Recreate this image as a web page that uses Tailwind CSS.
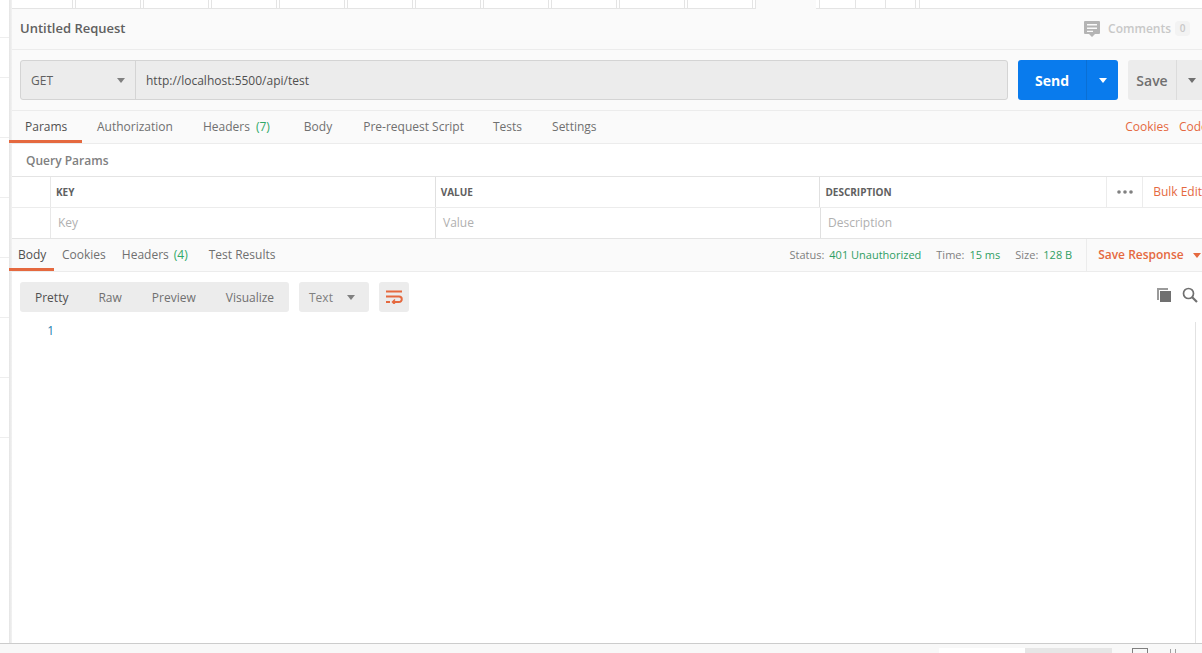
<!DOCTYPE html>
<html lang="en">
<head>
  <meta charset="UTF-8" />
  <title>Untitled Request</title>
  <script src="https://cdn.jsdelivr.net/npm/@tailwindcss/browser@4"></script>
</head>
<body class="h-[653px] w-[1202px] overflow-hidden bg-white font-['Open_Sans',sans-serif] text-[#505050]">
  <div class="flex h-[643px]">
    <!-- sidebar edge -->
    <div class="w-[9px] shrink-0 bg-white">
      <div class="h-[38px] border-b border-[#eeeeee]"></div>
      <div class="h-[40px] border-b border-[#eeeeee]"></div>
      <div class="h-[60px] border-b border-[#eeeeee]"></div>
      <div class="h-[60px] border-b border-[#eeeeee]"></div>
      <div class="h-[60px] border-b border-[#eeeeee]"></div>
      <div class="h-[60px] border-b border-[#eeeeee]"></div>
      <div class="h-[60px] border-b border-[#eeeeee]"></div>
      <div class="h-[60px] border-b border-[#eeeeee]"></div>
    </div>

    <div class="relative min-w-0 flex-1 overflow-hidden">
      <div class="absolute inset-y-0 left-0 w-[3px] bg-gradient-to-r from-[#e4e4e4] to-[#f2f2f2]"></div>

      <!-- request tab strip -->
      <div class="flex h-[9px] items-stretch border-b border-[#e4e4e4] bg-white pl-[63px]">
        <div class="w-[4px] border-x border-[#e4e4e4]"></div><div class="w-[64px]"></div>
        <div class="w-[4px] border-x border-[#e4e4e4]"></div><div class="w-[64px]"></div>
        <div class="w-[4px] border-x border-[#e4e4e4]"></div><div class="w-[64px]"></div>
        <div class="w-[4px] border-x border-[#e4e4e4]"></div><div class="w-[64px]"></div>
        <div class="w-[4px] border-x border-[#e4e4e4]"></div><div class="w-[64px]"></div>
        <div class="w-[4px] border-x border-[#e4e4e4]"></div><div class="w-[64px]"></div>
        <div class="w-[4px] border-x border-[#e4e4e4]"></div><div class="w-[64px]"></div>
        <div class="w-[4px] border-x border-[#e4e4e4]"></div><div class="w-[64px]"></div>
        <div class="w-[4px] border-x border-[#e4e4e4]"></div><div class="w-[64px]"></div>
        <div class="w-[4px] border-x border-[#e4e4e4]"></div><div class="w-[64px]"></div>
        <div class="w-[4px] border-x border-[#e4e4e4]"></div>
        <div class="-mb-px w-[60px] bg-[#fafafa]"></div>
        <div class="w-[3px]"></div>
        <div class="w-[37px] border-x border-[#e4e4e4]"></div>
        <div class="w-[30px] border-r border-[#e4e4e4]"></div>
        <div class="w-[30px] border-r border-[#e4e4e4]"></div>
        <div class="w-[4px] border-r border-[#e4e4e4]"></div>
      </div>

      <!-- title -->
      <div class="flex h-[41px] items-center justify-between border-b border-[#ececec] bg-[#fafafa] pb-px pl-[11px] pr-[12px]">
        <div class="text-[13px] font-semibold text-[#606060]">Untitled Request</div>
        <div class="flex items-center text-[12px] font-semibold text-[#c8c8c8]">
          <svg class="mr-2 mt-px" width="16" height="17" viewBox="0 0 16 17"><path fill="#b4b4b4" fill-rule="evenodd" d="M1 0h14a1 1 0 0 1 1 1v11a1 1 0 0 1-1 1h-4l-3 3-3-3H1a1 1 0 0 1-1-1V1a1 1 0 0 1 1-1zm2 3v1.600h10V3zm0 3.500v1.600h10V6.500zm0 3.200v1.300h6V9.700z"/></svg>
          <span>Comments</span>
          <span class="ml-[4px] flex h-[15px] w-[15px] items-center justify-center rounded-sm bg-[#f3f3f3] text-[10px]">0</span>
        </div>
      </div>

      <!-- url bar -->
      <div class="flex h-[61px] items-start border-b border-[#ececec] bg-[#fafafa] pl-[11px] pt-[10px]">
        <div class="flex h-[40px] w-[988px] items-stretch rounded-[3px] border border-[#d4d4d4] bg-[#ececec] text-[12px]">
          <div class="flex w-[115px] items-center justify-between border-r border-[#d4d4d4] pl-[10px] pr-[10px] pt-px font-medium text-[#606060]">
            <span>GET</span>
            <svg width="8" height="5" viewBox="0 0 8 5"><path fill="#808080" d="M0 0h8L4 5z"/></svg>
          </div>
          <div class="flex items-center pl-[10px] pt-px text-[#505050]">http://localhost:5500/api/test</div>
        </div>
        <div class="ml-[10px] flex h-[40px] w-[100px] shrink-0 items-stretch rounded-[3px] bg-[#097bed] text-white">
          <div class="flex w-[69px] items-center justify-center border-r border-[#0a6fd4] text-[14px] font-bold">Send</div>
          <div class="flex flex-1 items-center justify-center">
            <svg width="8" height="5" viewBox="0 0 8 5"><path fill="#ffffff" d="M0 0h8L4 5z"/></svg>
          </div>
        </div>
        <div class="ml-[10px] flex h-[40px] w-[74px] shrink-0 items-stretch rounded-l-[3px] bg-[#ececec] text-[#707070]">
          <div class="flex w-[49px] items-center justify-center border-r border-[#dcdcdc] text-[14px] font-semibold">Save</div>
          <div class="flex flex-1 items-center justify-center pl-[5px]">
            <svg width="8" height="5" viewBox="0 0 8 5"><path fill="#707070" d="M0 0h8L4 5z"/></svg>
          </div>
        </div>
      </div>

      <!-- request tabs -->
      <div class="flex h-[33px] items-stretch border-b border-[#ececec] bg-[#fafafa] text-[12px] text-[#707070]">
        <div class="relative z-10 flex w-[73px] items-center border-b-[3px] border-[#e5693f] pl-[16px] pt-[3px] text-[#505050]">Params</div>
        <div class="ml-[15px] flex items-center">Authorization</div>
        <div class="ml-[30px] flex items-center">Headers <span class="ml-[6px] text-[#2fa866]">(7)</span></div>
        <div class="ml-[34px] flex items-center">Body</div>
        <div class="ml-[31px] flex items-center">Pre-request Script</div>
        <div class="ml-[29px] flex items-center">Tests</div>
        <div class="ml-[30px] flex items-center">Settings</div>
        <div class="ml-auto flex items-center whitespace-nowrap text-[#e5693f]"><span>Cookies</span><span class="ml-[10px] w-[23px] overflow-hidden">Code</span></div>
      </div>

      <!-- query params -->
      <div class="flex h-[33px] items-center border-b border-[#e4e4e4] pl-[17px] pt-px text-[12px] font-semibold text-[#808080]">Query Params</div>
      <div class="flex h-[31px] border-b border-[#ececec] text-[10px] font-bold text-[#606060]">
        <div class="w-[42px] border-r border-[#e8e8e8]"></div>
        <div class="flex w-[385px] items-center border-r border-[#e0e0e0] pl-[5px]">KEY</div>
        <div class="flex w-[385px] items-center border-r border-[#e0e0e0] pl-[5px]">VALUE</div>
        <div class="flex w-[287px] items-center border-r border-[#ececec] pl-[5px]">DESCRIPTION</div>
        <div class="flex w-[36px] items-center justify-center border-r border-[#ececec]">
          <svg width="16" height="4" viewBox="0 0 16 4"><circle cx="2" cy="2" r="1.800" fill="#808080"/><circle cx="8" cy="2" r="1.800" fill="#808080"/><circle cx="14" cy="2" r="1.800" fill="#808080"/></svg>
        </div>
        <div class="flex items-center whitespace-nowrap pl-[10px] text-[12px] font-normal text-[#e5693f]">Bulk Edit</div>
      </div>
      <div class="flex h-[31px] border-b border-[#e4e4e4] text-[12px] text-[#b0b0b0]">
        <div class="w-[42px] border-r border-[#e8e8e8]"></div>
        <div class="flex w-[385px] items-center border-r border-[#e0e0e0] pl-[7px]">Key</div>
        <div class="flex w-[385px] items-center border-r border-[#e0e0e0] pl-[7px]">Value</div>
        <div class="flex items-center pl-[7px]">Description</div>
      </div>

      <!-- response tabs -->
      <div class="flex h-[33px] items-stretch whitespace-nowrap border-b border-[#ececec] bg-[#fafafa] text-[12px] text-[#707070]">
        <div class="relative z-10 flex w-[45px] items-center border-b-[3px] border-[#e5693f] pl-[9px] pt-[3px] text-[#505050]">Body</div>
        <div class="ml-[8px] flex items-center">Cookies</div>
        <div class="ml-[16px] flex items-center">Headers <span class="ml-[5px] text-[#2fa866]">(4)</span></div>
        <div class="ml-[21px] flex items-center">Test Results</div>
        <div class="ml-[514px] flex items-center text-[11px]">
          <span class="text-[#808080]">Status:</span><span class="ml-[5px] text-[#2f9e63]">401 Unauthorized</span>
          <span class="ml-[15px] text-[#808080]">Time:</span><span class="ml-[5px] text-[#2f9e63]">15 ms</span>
          <span class="ml-[15px] text-[#808080]">Size:</span><span class="ml-[5px] text-[#2f9e63]">128 B</span>
        </div>
        <div class="ml-[14px] flex items-center border-l border-[#ececec] pl-[11px] font-semibold text-[#e5693f]">Save Response
          <svg class="ml-[9px]" width="8" height="5" viewBox="0 0 8 5"><path fill="#e5693f" d="M0 0h8L4 5z"/></svg>
        </div>
      </div>

      <!-- response toolbar -->
      <div class="flex h-[50px] items-start pl-[11px] pt-[10px] text-[12px] text-[#707070]">
        <div class="flex h-[30px] w-[269px] items-center rounded-[3px] bg-[#ececec] pt-px">
          <span class="ml-[15px] text-[#505050]">Pretty</span>
          <span class="ml-[30px]">Raw</span>
          <span class="ml-[30px]">Preview</span>
          <span class="ml-[30px]">Visualize</span>
        </div>
        <div class="ml-[10px] flex h-[30px] w-[70px] items-center justify-between rounded-[3px] bg-[#ececec] pl-[10px] pr-[14px] pt-px text-[#808080]">
          <span>Text</span>
          <svg width="8" height="5" viewBox="0 0 8 5"><path fill="#808080" d="M0 0h8L4 5z"/></svg>
        </div>
        <div class="ml-[10px] flex h-[30px] w-[30px] items-center justify-center rounded-[3px] bg-[#ececec]">
          <svg width="18" height="14" viewBox="0 0 18 14" fill="none" stroke="#e5693f" stroke-width="2"><path d="M1 1.500h16M1 6.500h13a2.700 2.700 0 0 1 0 5.500H8"/><path d="M1 12h4"/><path d="M10 9.500 7.500 12l2.500 2.500" stroke-width="1.500"/></svg>
        </div>
        <div class="ml-auto mr-[4px] flex items-center gap-[10px] pt-[5px]">
          <svg width="16" height="16" viewBox="0 0 16 16"><path fill="#9a9a9a" d="M1 1h11v2H3v10H1z"/><path fill="#707070" d="M4 4h11v11H4z"/></svg>
          <svg width="16" height="16" viewBox="0 0 16 16" fill="none" stroke="#707070"><circle cx="6.500" cy="6.500" r="5" stroke-width="1.700"/><path d="m10 10 5 5" stroke-width="2.200"/></svg>
        </div>
      </div>

      <!-- editor -->
      <div class="flex h-[321px] items-start">
        <div class="w-[45px] pt-[1px] text-right text-[12px] leading-[16px] text-[#1f7fae]">1</div>
        <div class="ml-auto h-full w-[7px] border-l border-[#e2e2e2]"></div>
      </div>
    </div>
  </div>

  <!-- status bar -->
  <div class="flex h-[10px] items-end overflow-hidden border-t border-[#cccccc] bg-[#f8f8f8] pl-[939px]">
    <div class="h-[5px] w-[86px] bg-white"></div>
    <div class="h-[5px] w-[87px] bg-[#e6e6e6]"></div>
    <div class="ml-[20px] h-[5px] w-[16px] border-x border-t border-[#808080]"></div>
    <div class="ml-[22px] h-[4px] w-[6px] border-x border-[#a0a0a0]"></div>
  </div>
</body>
</html>
